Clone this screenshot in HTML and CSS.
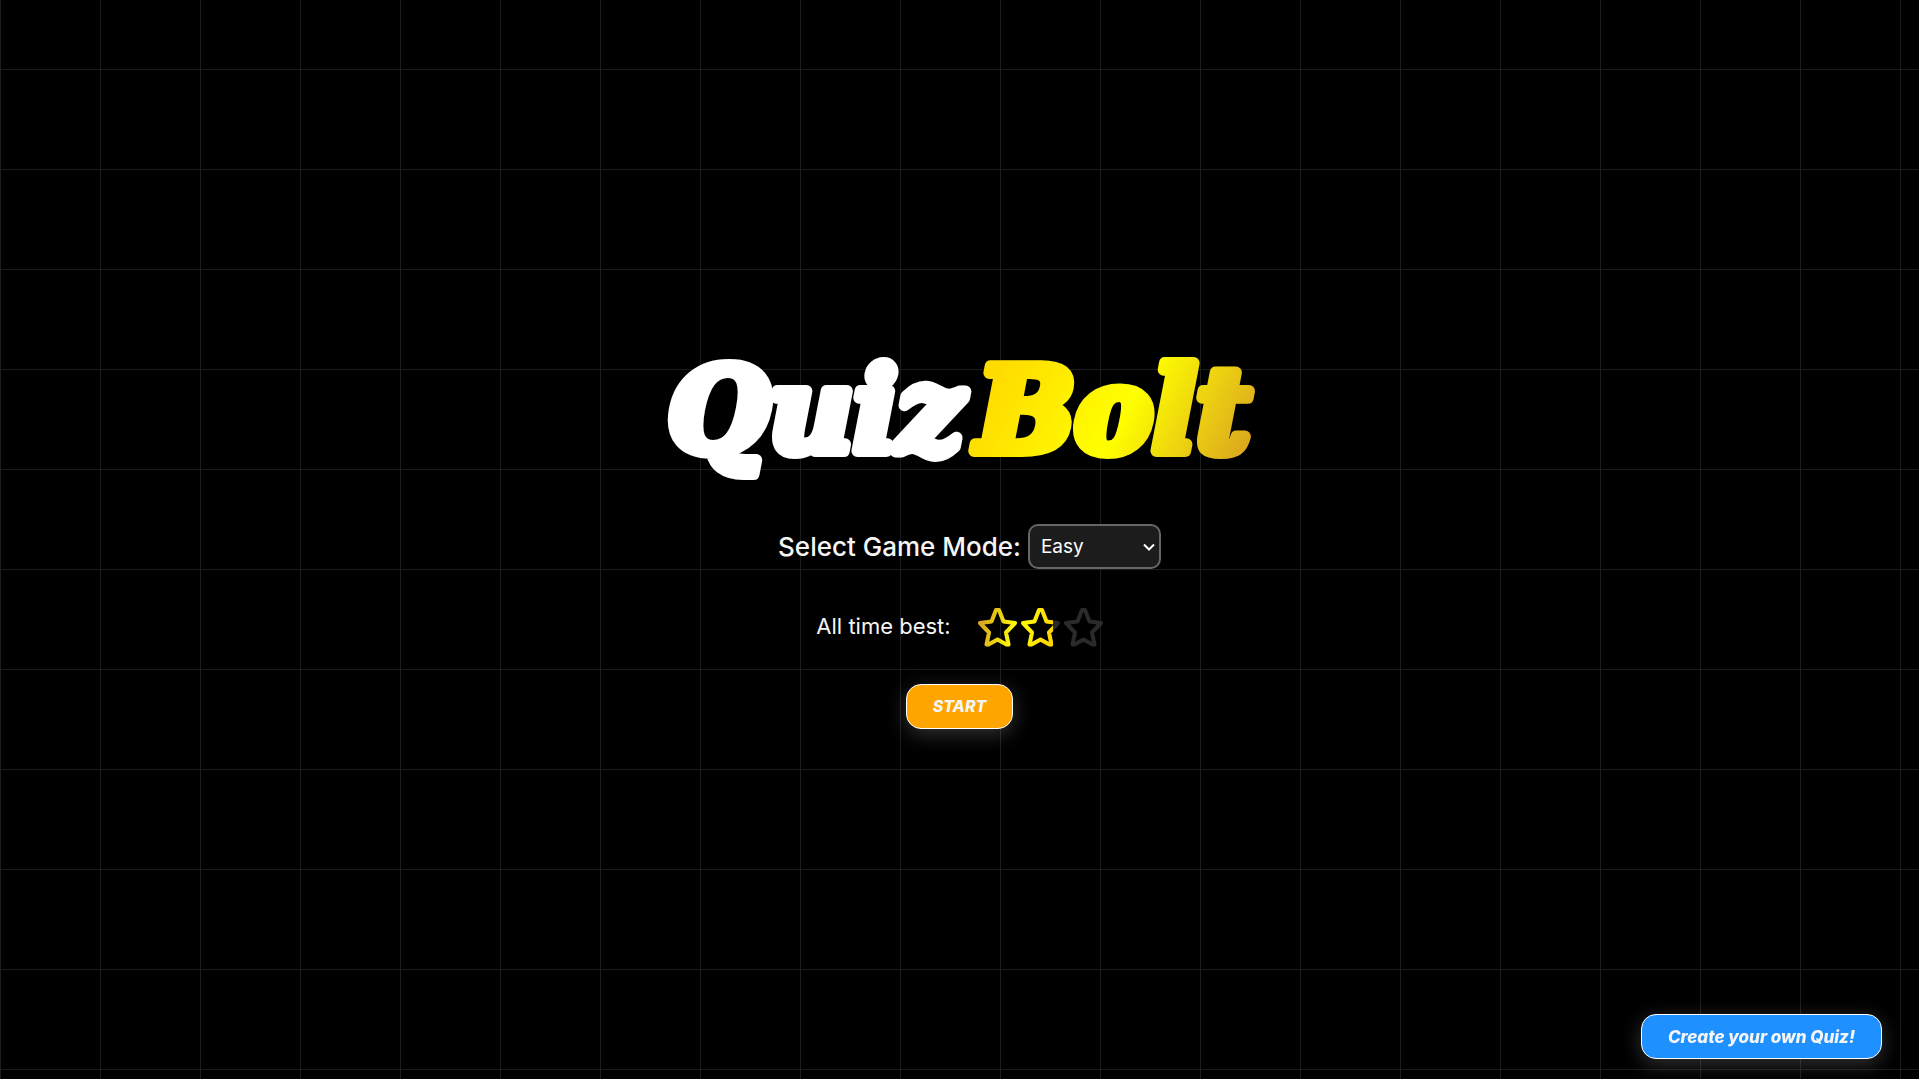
FILE: index.html
```html
<!DOCTYPE html>
<html lang="en">
<head>
  <meta charset="utf-8">
  <meta name="viewport" content="width=device-width, initial-scale=1">
  <title>QuizBolt</title>
  <link rel="stylesheet" href="styles.css">
</head>
<body>
  <main class="home">
    <h1 class="logo">
      <svg class="logo-art" width="600" height="148" viewBox="0 0 600 148">
        <defs>
          <linearGradient id="gold" gradientUnits="userSpaceOnUse" x1="340" y1="20" x2="570" y2="140">
            <stop offset="0" stop-color="#ffdc00"/>
            <stop offset=".5" stop-color="#ffff00"/>
            <stop offset="1" stop-color="#daa520"/>
          </linearGradient>
        </defs>
        <text class="logo-quiz" x="8" y="100">Quiz</text>
        <text class="logo-bolt" x="317" y="100">Bolt</text>
      </svg>
    </h1>

    <div class="mode">
      <label class="mode-label" for="mode">Select Game Mode:</label>
      <span class="mode-field">
        <select class="mode-select" id="mode">
          <option selected>Easy</option>
          <option>Medium</option>
          <option>Hard</option>
        </select>
        <svg class="mode-arrow" width="12" height="8" viewBox="0 0 12 8" aria-hidden="true"><path d="M1 1.500 6 6.500 11 1.500" fill="none" stroke="#fff" stroke-width="2"/></svg>
      </span>
    </div>

    <div class="best">
      <span class="best-label">All time best:</span>
      <svg class="stars" width="125" height="41" viewBox="0 -2 125 41" role="img" aria-label="Two of three stars">
        <defs>
          <linearGradient id="bolt" gradientUnits="userSpaceOnUse" x1="4" y1="10" x2="74" y2="26">
            <stop offset="0" stop-color="#daa520"/>
            <stop offset=".5" stop-color="#ffff00"/>
            <stop offset="1" stop-color="#ffd700"/>
          </linearGradient>
          <path id="star" d="M18 2h3l4.500 11.500L37 15l-9 9.500 2.500 12h-2l-9-5-9 5h-2L11 24.500 2 15l11.500-1.500Z"/>
          <g id="row"><use href="#star"/><use href="#star" x="43"/><use href="#star" x="86"/></g>
          <mask id="outline" maskUnits="userSpaceOnUse" x="0" y="-2" width="125" height="41"><use class="star-line star-mask" href="#row"/></mask>
        </defs>
        <use class="star-line star-empty" href="#row"/>
        <rect y="-2" width="75" height="41" fill="url(#bolt)" mask="url(#outline)"/>
      </svg>
    </div>

    <button class="button button-start" type="button">START</button>
  </main>
  <button class="button button-create" type="button">Create your own Quiz!</button>
</body>
</html>
```
FILE: styles.css
```css
* {
  box-sizing: border-box;
}

body {
  margin: 0;
  min-height: 100vh;
  color: #f5f5f5;
  font-family: Inter, "Open Sans", sans-serif;
  background-color: #000;
  background-image:
    linear-gradient(to right, #1c1c1c 1px, transparent 1px),
    linear-gradient(to bottom, #1c1c1c 1px, transparent 1px);
  background-size: 100px 100px;
  background-position: 0 69px;
}

.home {
  min-height: 100vh;
  display: flex;
  flex-direction: column;
  align-items: center;
  justify-content: center;
  gap: 25px;
}

.logo {
  margin: 0;
  font: italic 700 116px "DejaVu Serif", serif;
}

.logo-art {
  display: block;
  overflow: visible;
  stroke-width: 12px;
  stroke-linejoin: round;
}

.logo-quiz {
  fill: #fff;
  stroke: #fff;
}

.logo-bolt {
  fill: url(#gold);
  stroke: url(#gold);
}

.mode {
  display: flex;
  align-items: center;
  gap: 7px;
  padding-left: 20px;
}

.mode-label {
  font-size: 26px;
  font-weight: 500;
}

.mode-field {
  position: relative;
}

.mode-select {
  display: block;
  width: 133px;
  height: 45px;
  padding: 0 11px;
  appearance: none;
  border: 2px solid #666;
  border-radius: 10px;
  background: #1c1c1c;
  color: #fff;
  font: 19px Inter, "Open Sans", sans-serif;
}

.mode-arrow {
  position: absolute;
  right: 6px;
  top: 19px;
  pointer-events: none;
}

.best {
  display: flex;
  align-items: center;
  gap: 27px;
  height: 65px;
}

.best-label {
  font-size: 22px;
}

.star-line {
  fill: none;
  stroke-width: 4;
  stroke-linejoin: round;
}

.star-empty {
  stroke: #2a2a2a;
}

.star-mask {
  stroke: #fff;
}

.button {
  height: 45px;
  padding: 0 26px;
  border: 1px solid #fff;
  border-radius: 15px;
  color: #f5f5f5;
  font: italic 800 17px Inter, "Open Sans", sans-serif;
  box-shadow: 0 5px 20px rgba(255, 255, 255, 0.2);
  cursor: pointer;
}

.button-start {
  background: #ffa500;
  font-size: 16px;
}

.button-create {
  position: fixed;
  right: 37px;
  bottom: 20px;
  background: #1e90ff;
}
```
